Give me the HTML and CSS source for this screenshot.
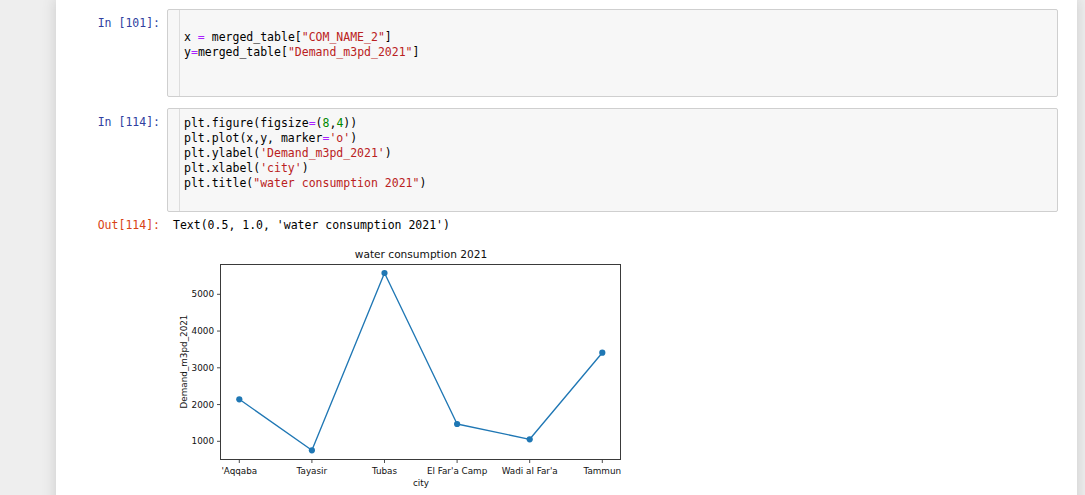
FILE: index.html
```html
<!DOCTYPE html>
<html>
<head>
<meta charset="utf-8">
<link rel="stylesheet" href="styles.css">
</head>
<body>
<div class="notebook">
  <div class="cell cell-first">
    <div class="prompt prompt-in">In&nbsp;[101]:</div>
    <div class="input">
      <div class="gutter"></div>
      <div class="code code-one">
        <div class="line"></div>
        <div class="line">x <span class="op">=</span> merged_table[<span class="str">"COM_NAME_2"</span>]</div>
        <div class="line">y<span class="op">=</span>merged_table[<span class="str">"Demand_m3pd_2021"</span>]</div>
        <div class="line"></div>
        <div class="line"></div>
      </div>
    </div>
  </div>

  <div class="cell cell-second">
    <div class="prompt prompt-in">In&nbsp;[114]:</div>
    <div class="input">
      <div class="gutter"></div>
      <div class="code code-two">
        <div class="line">plt.figure(figsize<span class="op">=</span>(<span class="num">8</span>,<span class="num">4</span>))</div>
        <div class="line">plt.plot(x,y, marker<span class="op">=</span><span class="str">'o'</span>)</div>
        <div class="line">plt.ylabel(<span class="str">'Demand_m3pd_2021'</span>)</div>
        <div class="line">plt.xlabel(<span class="str">'city'</span>)</div>
        <div class="line">plt.title(<span class="str">"water consumption 2021"</span>)</div>
        <div class="line"></div>
      </div>
    </div>
  </div>

  <div class="cell cell-output">
    <div class="prompt prompt-out">Out[114]:</div>
    <div class="output">
      <div class="out-text">Text(0.5, 1.0, 'water consumption 2021')</div>
      <svg class="chart" width="470" height="255" viewBox="0 0 470 255" xmlns="http://www.w3.org/2000/svg">
        <g class="chart-text">
          <text x="248" y="18" text-anchor="middle" font-size="10.6">water consumption 2021</text>
        </g>
        <rect x="47.5" y="24.5" width="400" height="195" fill="#fff" stroke="#3a3a3a" stroke-width="1"/>
        <g stroke="#3a3a3a" stroke-width="0.9">
          <line x1="44" y1="201.3" x2="47.5" y2="201.3"/>
          <line x1="44" y1="164.55" x2="47.5" y2="164.55"/>
          <line x1="44" y1="127.8" x2="47.5" y2="127.8"/>
          <line x1="44" y1="91.05" x2="47.5" y2="91.05"/>
          <line x1="44" y1="54.3" x2="47.5" y2="54.3"/>
          <line x1="66.3" y1="219.5" x2="66.3" y2="223"/>
          <line x1="138.9" y1="219.5" x2="138.9" y2="223"/>
          <line x1="211.5" y1="219.5" x2="211.5" y2="223"/>
          <line x1="284.1" y1="219.5" x2="284.1" y2="223"/>
          <line x1="356.7" y1="219.5" x2="356.7" y2="223"/>
          <line x1="429.3" y1="219.5" x2="429.3" y2="223"/>
        </g>
        <g class="chart-text" font-size="8.8">
          <text x="41" y="204.4" text-anchor="end">1000</text>
          <text x="41" y="167.6" text-anchor="end">2000</text>
          <text x="41" y="130.9" text-anchor="end">3000</text>
          <text x="41" y="94.1" text-anchor="end">4000</text>
          <text x="41" y="57.4" text-anchor="end">5000</text>
          <text x="66.3" y="233.5" text-anchor="middle">'Aqqaba</text>
          <text x="138.9" y="233.5" text-anchor="middle">Tayasir</text>
          <text x="211.5" y="233.5" text-anchor="middle">Tubas</text>
          <text x="284.1" y="233.5" text-anchor="middle">El Far'a Camp</text>
          <text x="356.7" y="233.5" text-anchor="middle">Wadi al Far'a</text>
          <text x="429.3" y="233.5" text-anchor="middle">Tammun</text>
          <text x="248" y="245.5" text-anchor="middle">city</text>
          <text transform="translate(13.5,121.5) rotate(-90)" x="0" y="0" text-anchor="middle">Demand_m3pd_2021</text>
        </g>
        <polyline points="66.3,159.3 138.9,210.3 211.5,33 284.1,184 356.7,199.3 429.3,112.7" fill="none" stroke="#1f77b4" stroke-width="1.35" stroke-linejoin="round"/>
        <g fill="#1f77b4">
          <circle cx="66.3" cy="159.3" r="3.1"/>
          <circle cx="138.9" cy="210.3" r="3.1"/>
          <circle cx="211.5" cy="33" r="3.1"/>
          <circle cx="284.1" cy="184" r="3.1"/>
          <circle cx="356.7" cy="199.3" r="3.1"/>
          <circle cx="429.3" cy="112.7" r="3.1"/>
        </g>
      </svg>
    </div>
  </div>
</div>
</body>
</html>
```

FILE: styles.css
```css
html, body {
  margin: 0;
  padding: 0;
}

body {
  background: #eeeeee;
  overflow: hidden;
  font-family: "DejaVu Sans Mono", "Liberation Mono", monospace;
}

.notebook {
  margin-left: 56px;
  width: 1021px;
  min-height: 600px;
  background: #ffffff;
  box-shadow: 0 0 12px 1px rgba(87, 87, 87, 0.2);
  padding: 9px 19px 0 0;
  box-sizing: border-box;
}

.cell {
  display: flex;
  align-items: flex-start;
}

.cell-second {
  margin-top: 11px;
}

.cell-output {
  padding-top: 5px;
}

.prompt {
  width: 111px;
  flex: none;
  box-sizing: border-box;
  padding-right: 7px;
  text-align: right;
  font-size: 11.5px;
  line-height: 15px;
  white-space: nowrap;
}

.prompt-in {
  color: #303f9f;
  padding-top: 7px;
}

.prompt-out {
  color: #d84315;
  padding-top: 0.5px;
}

.input {
  flex: 1;
  display: flex;
  border: 1px solid #cfcfcf;
  border-radius: 2px;
  background: #f7f7f7;
}

.gutter {
  width: 11px;
  flex: none;
  border-right: 1px solid #dddddd;
}

.code {
  flex: 1;
  padding-left: 4px;
  font-size: 11.5px;
  line-height: 15px;
  color: #000000;
}

.line {
  height: 15px;
  white-space: pre;
}

.code-one {
  padding-top: 5px;
  padding-bottom: 6px;
}

.code-two {
  padding-top: 7px;
  padding-bottom: 5px;
}

.op {
  color: #aa22ff;
}

.str {
  color: #ba2121;
}

.num {
  color: #008800;
}

.output {
  flex: 1;
  display: flex;
  flex-direction: column;
  padding-left: 6px;
}

.out-text {
  font-size: 11.5px;
  line-height: 15px;
  color: #000000;
  white-space: pre;
  padding-top: 0.5px;
}

.chart {
  display: block;
  margin-top: 7px;
}

.chart-text {
  font-family: "DejaVu Sans", "Liberation Sans", sans-serif;
  fill: #111111;
}
```
